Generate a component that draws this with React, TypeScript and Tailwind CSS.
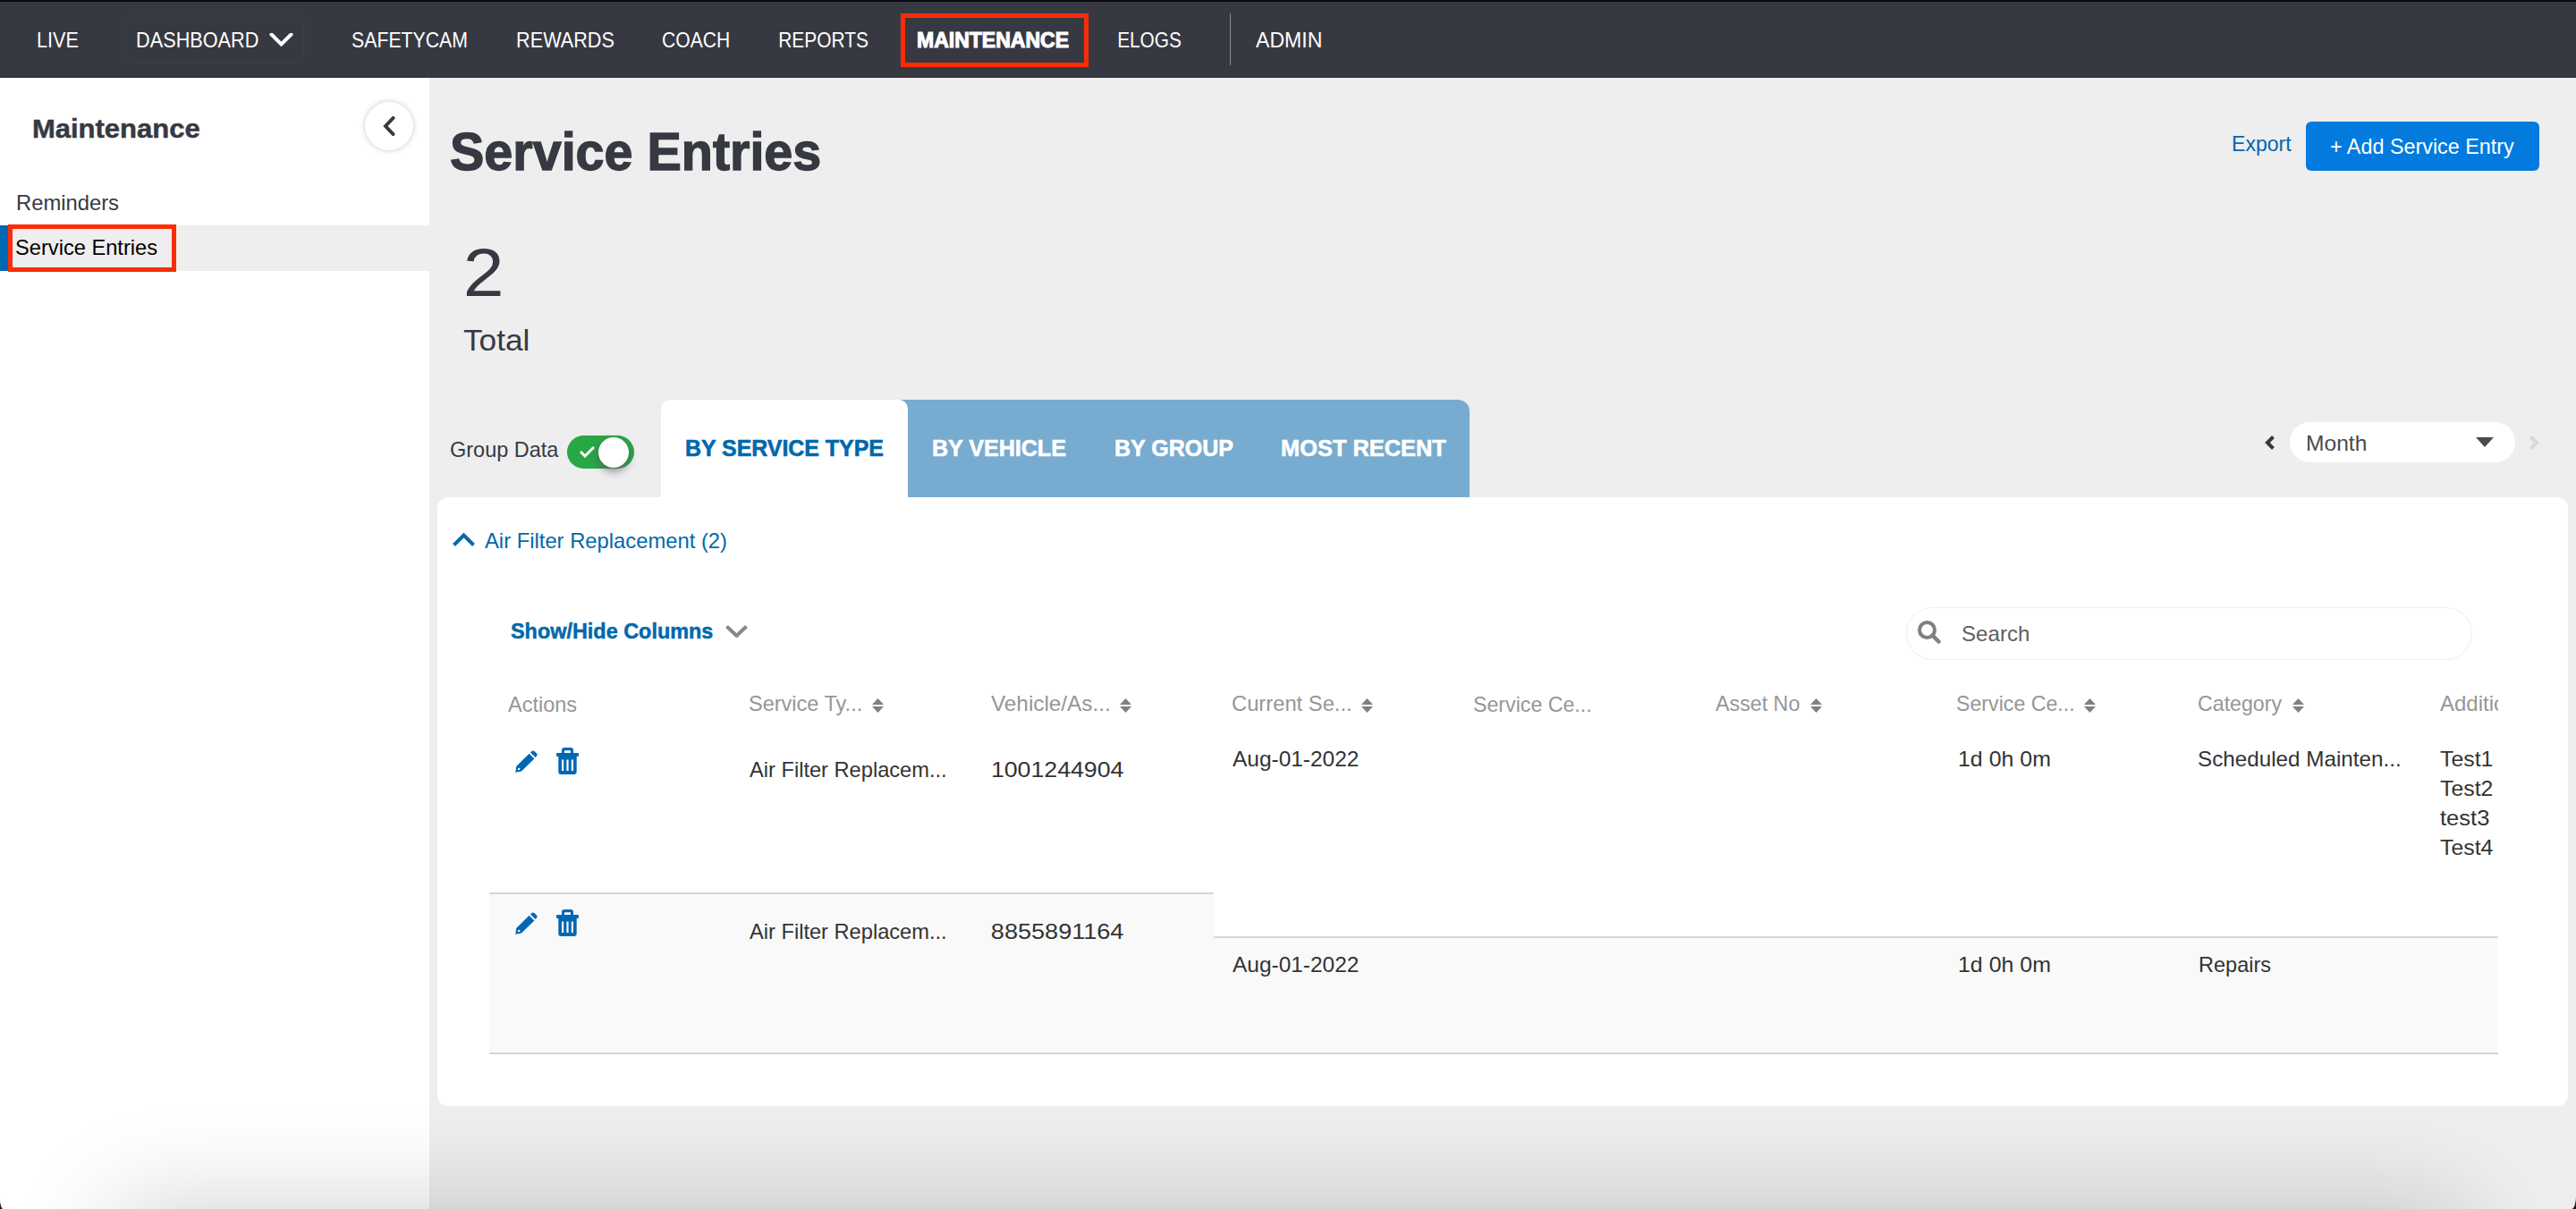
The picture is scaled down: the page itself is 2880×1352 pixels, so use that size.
import { useLayoutEffect, useRef } from "react";

/* Text whose inked width fills its box exactly, whatever the font's own metrics are. */
function Label({ text, className = "" }: { text: string; className?: string }) {
  const box = useRef<HTMLSpanElement>(null);
  const inner = useRef<HTMLSpanElement>(null);
  useLayoutEffect(() => {
    const b = box.current;
    const s = inner.current;
    const ctx = document.createElement("canvas").getContext("2d");
    if (!b || !s || !ctx) return;
    const cs = getComputedStyle(s);
    ctx.font = `${cs.fontWeight} ${cs.fontSize} ${cs.fontFamily}`;
    const m = ctx.measureText(text);
    const left = -m.actualBoundingBoxLeft;
    const ink = m.actualBoundingBoxRight + m.actualBoundingBoxLeft;
    const k = b.clientWidth / ink;
    s.style.transform = `translateX(${left * -k}px) scaleX(${k})`;
  }, [text]);
  return (
    <span ref={box} className={`block shrink-0 whitespace-nowrap leading-8 ${className}`}>
      <span ref={inner} className="inline-block origin-left">
        {text}
      </span>
    </span>
  );
}

type ChevronProps = { className: string; points: string; box: string; width: number; round?: boolean };

function Chevron({ className, points, box, width, round }: ChevronProps) {
  return (
    <svg viewBox={box} className={`block shrink-0 ${className}`} fill="none" stroke="currentColor" strokeWidth={width} strokeLinecap={round ? "round" : "butt"}>
      <polyline points={points} />
    </svg>
  );
}

function NavBar() {
  return (
    <header className="flex h-[87px] items-start border-t-2 border-b border-t-[#0b0b12] border-b-[#2c2e36] bg-[#373942] text-2xl text-white">
      <Label text="LIVE" className="mt-[27px] ml-[42px] w-[45px]" />
      <div className="mt-[15px] ml-[54px] flex h-[54px] w-[199px] rounded-lg border border-[#3c3e47] pt-[11px] pl-[11px]">
        <Label text="DASHBOARD" className="w-[136px]" />
        <Chevron className="mt-2 ml-[12px] h-[15px] w-[27px]" box="0 0 27 15" points="2.5,1.5 13.5,12.5 24.5,1.5" width={4} round />
      </div>
      <Label text="SAFETYCAM" className="mt-[27px] ml-[54px] w-[128px]" />
      <Label text="REWARDS" className="mt-[27px] ml-[56px] w-[108px]" />
      <Label text="COACH" className="mt-[27px] ml-[55px] w-[74px]" />
      <Label text="REPORTS" className="mt-[27px] ml-[56px] w-[99px]" />
      <div className="mt-[13px] ml-[37px] flex h-[60px] w-[210px] border-[5px] border-[#fb2c06] pt-[9px] pl-[14px]">
        <Label text="MAINTENANCE" className="w-[169px] font-bold [-webkit-text-stroke:1.1px_white]" />
      </div>
      <Label text="ELOGS" className="mt-[27px] ml-[33px] w-[70px]" />
      <div className="mt-[13px] ml-[55px] h-[58px] w-px bg-[#8b8c91]" />
      <Label text="ADMIN" className="mt-[27px] ml-[28px] w-[73px]" />
    </header>
  );
}

function SideBar() {
  return (
    <aside className="w-[480px] shrink-0 bg-white text-2xl text-[#373942]">
      <div className="flex h-[124px]">
        <Label text="Maintenance" className="mt-[41px] ml-[38px] w-[185px] text-[30px] font-bold [-webkit-text-stroke:0.5px_#373942]" />
        <div className="mt-[27px] ml-[185px] flex size-[54px] items-center justify-center rounded-full bg-white shadow-[0_0_6px_rgba(0,0,0,0.22)]">
          <Chevron className="h-[22px] w-[14px]" box="0 0 14 22" points="11.5,2 3,11 11.5,20" width={4} round />
        </div>
      </div>
      <div className="h-[41px]">
        <Label text="Reminders" className="ml-[19px] w-[114px]" />
      </div>
      <div className="flex h-[51px] items-center border-l-[9px] border-[#0068b3] bg-[#eeeeee] text-black">
        <div className="h-[53px] w-[188px] shrink-0 border-[5px] border-[#fb2c06] pt-[5px] pl-1">
          <Label text="Service Entries" className="w-[158px]" />
        </div>
      </div>
    </aside>
  );
}

function Toggle() {
  return (
    <div className="flex h-[37px] w-[75px] items-center justify-between rounded-full bg-[#28a745] pr-[6px] pl-[14px]">
      <svg viewBox="0 0 17 13" className="h-[13px] w-[17px]" fill="none" stroke="white" strokeWidth="3">
        <polyline points="1,6 6,11 16,1" />
      </svg>
      <div className="size-[34px] rounded-full bg-white shadow-[0_4px_10px_rgba(90,70,90,0.65)]" />
    </div>
  );
}

function Summary() {
  return (
    <>
      <div className="flex h-[178px] text-2xl">
        <h1 className="ml-[24px] pt-[67px] text-[#373942]">
          <Label text="Service Entries" className="w-[412px] text-[60px] font-bold [-webkit-text-stroke:1.4px_#373942]" />
        </h1>
        <div className="mr-[41px] ml-auto flex pt-[49px]">
          <Label text="Export" className="mt-[9px] w-[66px] text-[#0068ad]" />
          <button className="ml-[16px] flex h-[55px] w-[261px] rounded-md bg-[#037bde] pt-[12px] pl-[28px] text-white">
            <Label text="+ Add Service Entry" className="w-[206px] text-left" />
          </button>
        </div>
      </div>
      <div className="h-[182px] text-[#373942]">
        <Label text="2" className="ml-[41px] w-[39px] pt-[24px] text-[76px]" />
        <Label text="Total" className="mt-[44px] ml-[38px] w-[73px] text-[33px]" />
      </div>
    </>
  );
}

function Tabs() {
  return (
    <div className="flex h-[109px]">
      <Label text="Group Data" className="mt-[40px] ml-[24px] w-[121px] text-2xl text-[#373942]" />
      <div className="mt-[40px] ml-[9px]">
        <Toggle />
      </div>
      <div className="ml-[30px] flex w-[904px] rounded-t-[13px] bg-[#78abd0] text-[26px] font-bold text-white [-webkit-text-stroke:0.6px_currentColor]">
        <div className="w-[276px] shrink-0 rounded-t-[10px] bg-white pt-[38px] pl-[28px] text-[#0068ad]">
          <Label text="BY SERVICE TYPE" className="w-[221px]" />
        </div>
        <Label text="BY VEHICLE" className="mt-[38px] ml-[28px] w-[149px]" />
        <Label text="BY GROUP" className="mt-[38px] ml-[55px] w-[132px]" />
        <Label text="MOST RECENT" className="mt-[38px] ml-[54px] w-[184px]" />
      </div>
      <div className="mr-[41px] ml-auto flex items-start pt-[25px] text-2xl">
        <Chevron className="mt-[15px] h-[16px] w-[11px] text-[#373942]" box="0 0 11 16" points="9.5,1.5 3,8 9.5,14.5" width={4} />
        <div className="ml-[17px] flex h-[45px] w-[252px] rounded-full bg-white pt-[8px] pl-[19px] text-[#4b4b4b]">
          <Label text="Month" className="w-[66px]" />
          <svg viewBox="0 0 20 11" className="mt-[9px] ml-[123px] h-[11px] w-[20px]" fill="currentColor">
            <path d="M0 0H20L10 11Z" />
          </svg>
        </div>
        <Chevron className="mt-[15px] ml-[16px] h-[16px] w-[11px] text-[#d8d8d8]" box="0 0 11 16" points="1.5,1.5 8,8 1.5,14.5" width={4} />
      </div>
    </div>
  );
}

function SortIcon() {
  return (
    <svg viewBox="0 0 13 16" className="mt-[10px] ml-[12px] h-[16px] w-[13px] shrink-0" fill="#808080">
      <path d="M6.5 0L13 7H0ZM0 9H13L6.5 16Z" />
    </svg>
  );
}

function Head({ text, w, sort = true }: { text: string; w: string; sort?: boolean }) {
  return (
    <div className={`flex w-[270px] shrink-0 pl-[21px] ${sort ? "pt-[15px]" : "pt-[16px]"}`}>
      <Label text={text} className={w} />
      {sort && <SortIcon />}
    </div>
  );
}

function Cell({ text, w }: { text?: string; w?: string }) {
  return (
    <div className="w-[270px] shrink-0 pl-[21px]">{text && <Label text={text} className={w} />}</div>
  );
}

function Actions() {
  return (
    <div className="flex w-[270px] shrink-0 items-start pl-[29px] text-[#0068b3]">
      <svg viewBox="0 0 25 25" className="mt-[3px] h-[25px] w-[25px]" fill="currentColor">
        <path d="M15.6 3.7L21.4 9.5L7 23.6L0.3 24.8L1.2 18ZM3.3 19.7L2.8 22.3L5.4 21.8L5.2 20Z" fillRule="evenodd" />
        <path d="M17 2.4L18.6 1Q20 -0.2 21.4 1L24 3.6Q25.2 5 24 6.4L22.7 8Z" />
      </svg>
      <svg viewBox="0 0 25 30" className="ml-[21px] h-[30px] w-[25px]" fill="currentColor" fillRule="evenodd">
        <path d="M6 6V3Q6 0 9 0H16Q19 0 19 3V6H24Q25 6 25 7V9Q25 10 24 10H0.9Q0 10 0 9V7Q0 6 1 6ZM9 6H16V3.2H9Z" />
        <path d="M2.3 9H22.7V27Q22.7 30 19.7 30H5.3Q2.3 30 2.3 27ZM6 13.5V26H8.2V13.5ZM11.4 13.5V26H13.6V13.5ZM16.8 13.5V26H19V13.5Z" />
      </svg>
    </div>
  );
}

function EntriesTable() {
  return (
    <div className="ml-[58px] flex w-[2246px] text-2xl text-[#333333]">
      <div className="w-[810px] shrink-0">
        <div className="flex h-[64px] text-[#969696]">
          <Head text="Actions" w="w-[77px]" sort={false} />
          <Head text="Service Ty..." w="w-[125px]" />
          <Head text="Vehicle/As..." w="w-[132px]" />
        </div>
        <div className="flex h-[180px] border-b-2 border-[#d6d6d6] pt-[16px]">
          <Actions />
          <div className="flex pt-[9px]">
            <Cell text="Air Filter Replacem..." w="w-[219px]" />
            <Cell text="1001244904" w="ml-[1px] w-[147px]" />
          </div>
        </div>
        <div className="flex h-[179px] border-b-2 border-[#d6d6d6] bg-[#f9f9f9] pt-[17px]">
          <Actions />
          <div className="flex pt-[9px]">
            <Cell text="Air Filter Replacem..." w="w-[219px]" />
            <Cell text="8855891164" w="ml-[1px] w-[147px]" />
          </div>
        </div>
      </div>
      <div className="min-w-0 flex-1 overflow-hidden">
        <div className="flex h-[64px] text-[#969696]">
          <Head text="Current Se..." w="w-[132px]" />
          <Head text="Service Ce..." w="w-[130px]" sort={false} />
          <Head text="Asset No" w="w-[94px]" />
          <Head text="Service Ce..." w="w-[130px]" />
          <Head text="Category" w="w-[93px]" />
          <Head text="Additional" w="w-[104px]" />
        </div>
        <div className="flex h-[229px] border-b-2 border-[#d6d6d6] pt-[13px]">
          <Cell text="Aug-01-2022" w="w-[141px]" />
          <Cell />
          <Cell />
          <Cell text="1d 0h 0m" w="ml-[2px] w-[102px]" />
          <Cell text="Scheduled Mainten..." w="w-[225px]" />
          <div className="flex w-[270px] shrink-0 flex-col gap-px pl-[21px]">
            <Label text="Test1" className="w-[59px]" />
            <Label text="Test2" className="w-[59px]" />
            <Label text="test3" className="w-[55px]" />
            <Label text="Test4" className="w-[59px]" />
          </div>
        </div>
        <div className="flex h-[130px] border-b-2 border-[#d6d6d6] bg-[#f9f9f9] pt-[14px]">
          <Cell text="Aug-01-2022" w="w-[141px]" />
          <Cell />
          <Cell />
          <Cell text="1d 0h 0m" w="ml-[2px] w-[102px]" />
          <Cell text="Repairs" w="ml-[1px] w-[80px]" />
        </div>
      </div>
    </div>
  );
}

function EntriesCard() {
  return (
    <section className="ml-[9px] h-[681px] w-[2382px] rounded-xl bg-white text-2xl">
      <div className="flex h-[123px] pt-[33px] pl-[17px] text-[#0068ad]">
        <Chevron className="mt-[7px] h-[15px] w-[25px]" box="0 0 25 15" points="1.5,13.5 12.5,2.5 23.5,13.5" width={4} />
        <Label text="Air Filter Replacement (2)" className="ml-[11px] w-[270px]" />
      </div>
      <div className="flex h-[77px] pl-[82px]">
        <Label text="Show/Hide Columns" className="mt-[11px] w-[226px] font-bold text-[#0068ad] [-webkit-text-stroke:0.5px_#0068ad]" />
        <Chevron className="mt-[20px] ml-[14px] h-[14px] w-[25px] text-[#888888]" box="0 0 25 14" points="1.5,1.5 12.5,12 23.5,1.5" width={4} />
        <div className="mr-[107px] ml-auto flex h-[59px] w-[633px] rounded-full border border-[#eeeeee] pt-[13px] pl-[12px]">
          <svg viewBox="0 0 26 26" className="mt-[1px] size-[26px]" fill="none" stroke="#808080">
            <circle cx="10.5" cy="10.5" r="8.5" strokeWidth="4" />
            <path d="M16.5 16.5L23.5 23.5" strokeWidth="4.5" strokeLinecap="round" />
          </svg>
          <Label text="Search" className="ml-[24px] w-[74px] text-[#606060]" />
        </div>
      </div>
      <EntriesTable />
    </section>
  );
}

export default function App() {
  return (
    <div className="h-[1352px] w-[2880px] bg-[#30140f] font-['Liberation_Sans',Arial,sans-serif]">
      <div className="relative flex h-full flex-col overflow-hidden rounded-br-[5px_14px] rounded-bl-[4px_12px] bg-[#eeeeee]">
        <NavBar />
        <div className="flex flex-1">
          <SideBar />
          <main className="flex-1">
            <Summary />
            <Tabs />
            <EntriesCard />
          </main>
        </div>
        <div className="absolute top-full right-[130px] left-[130px] h-[300px] shadow-[0_0_120px_rgba(0,0,0,0.2)]" />
      </div>
    </div>
  );
}
